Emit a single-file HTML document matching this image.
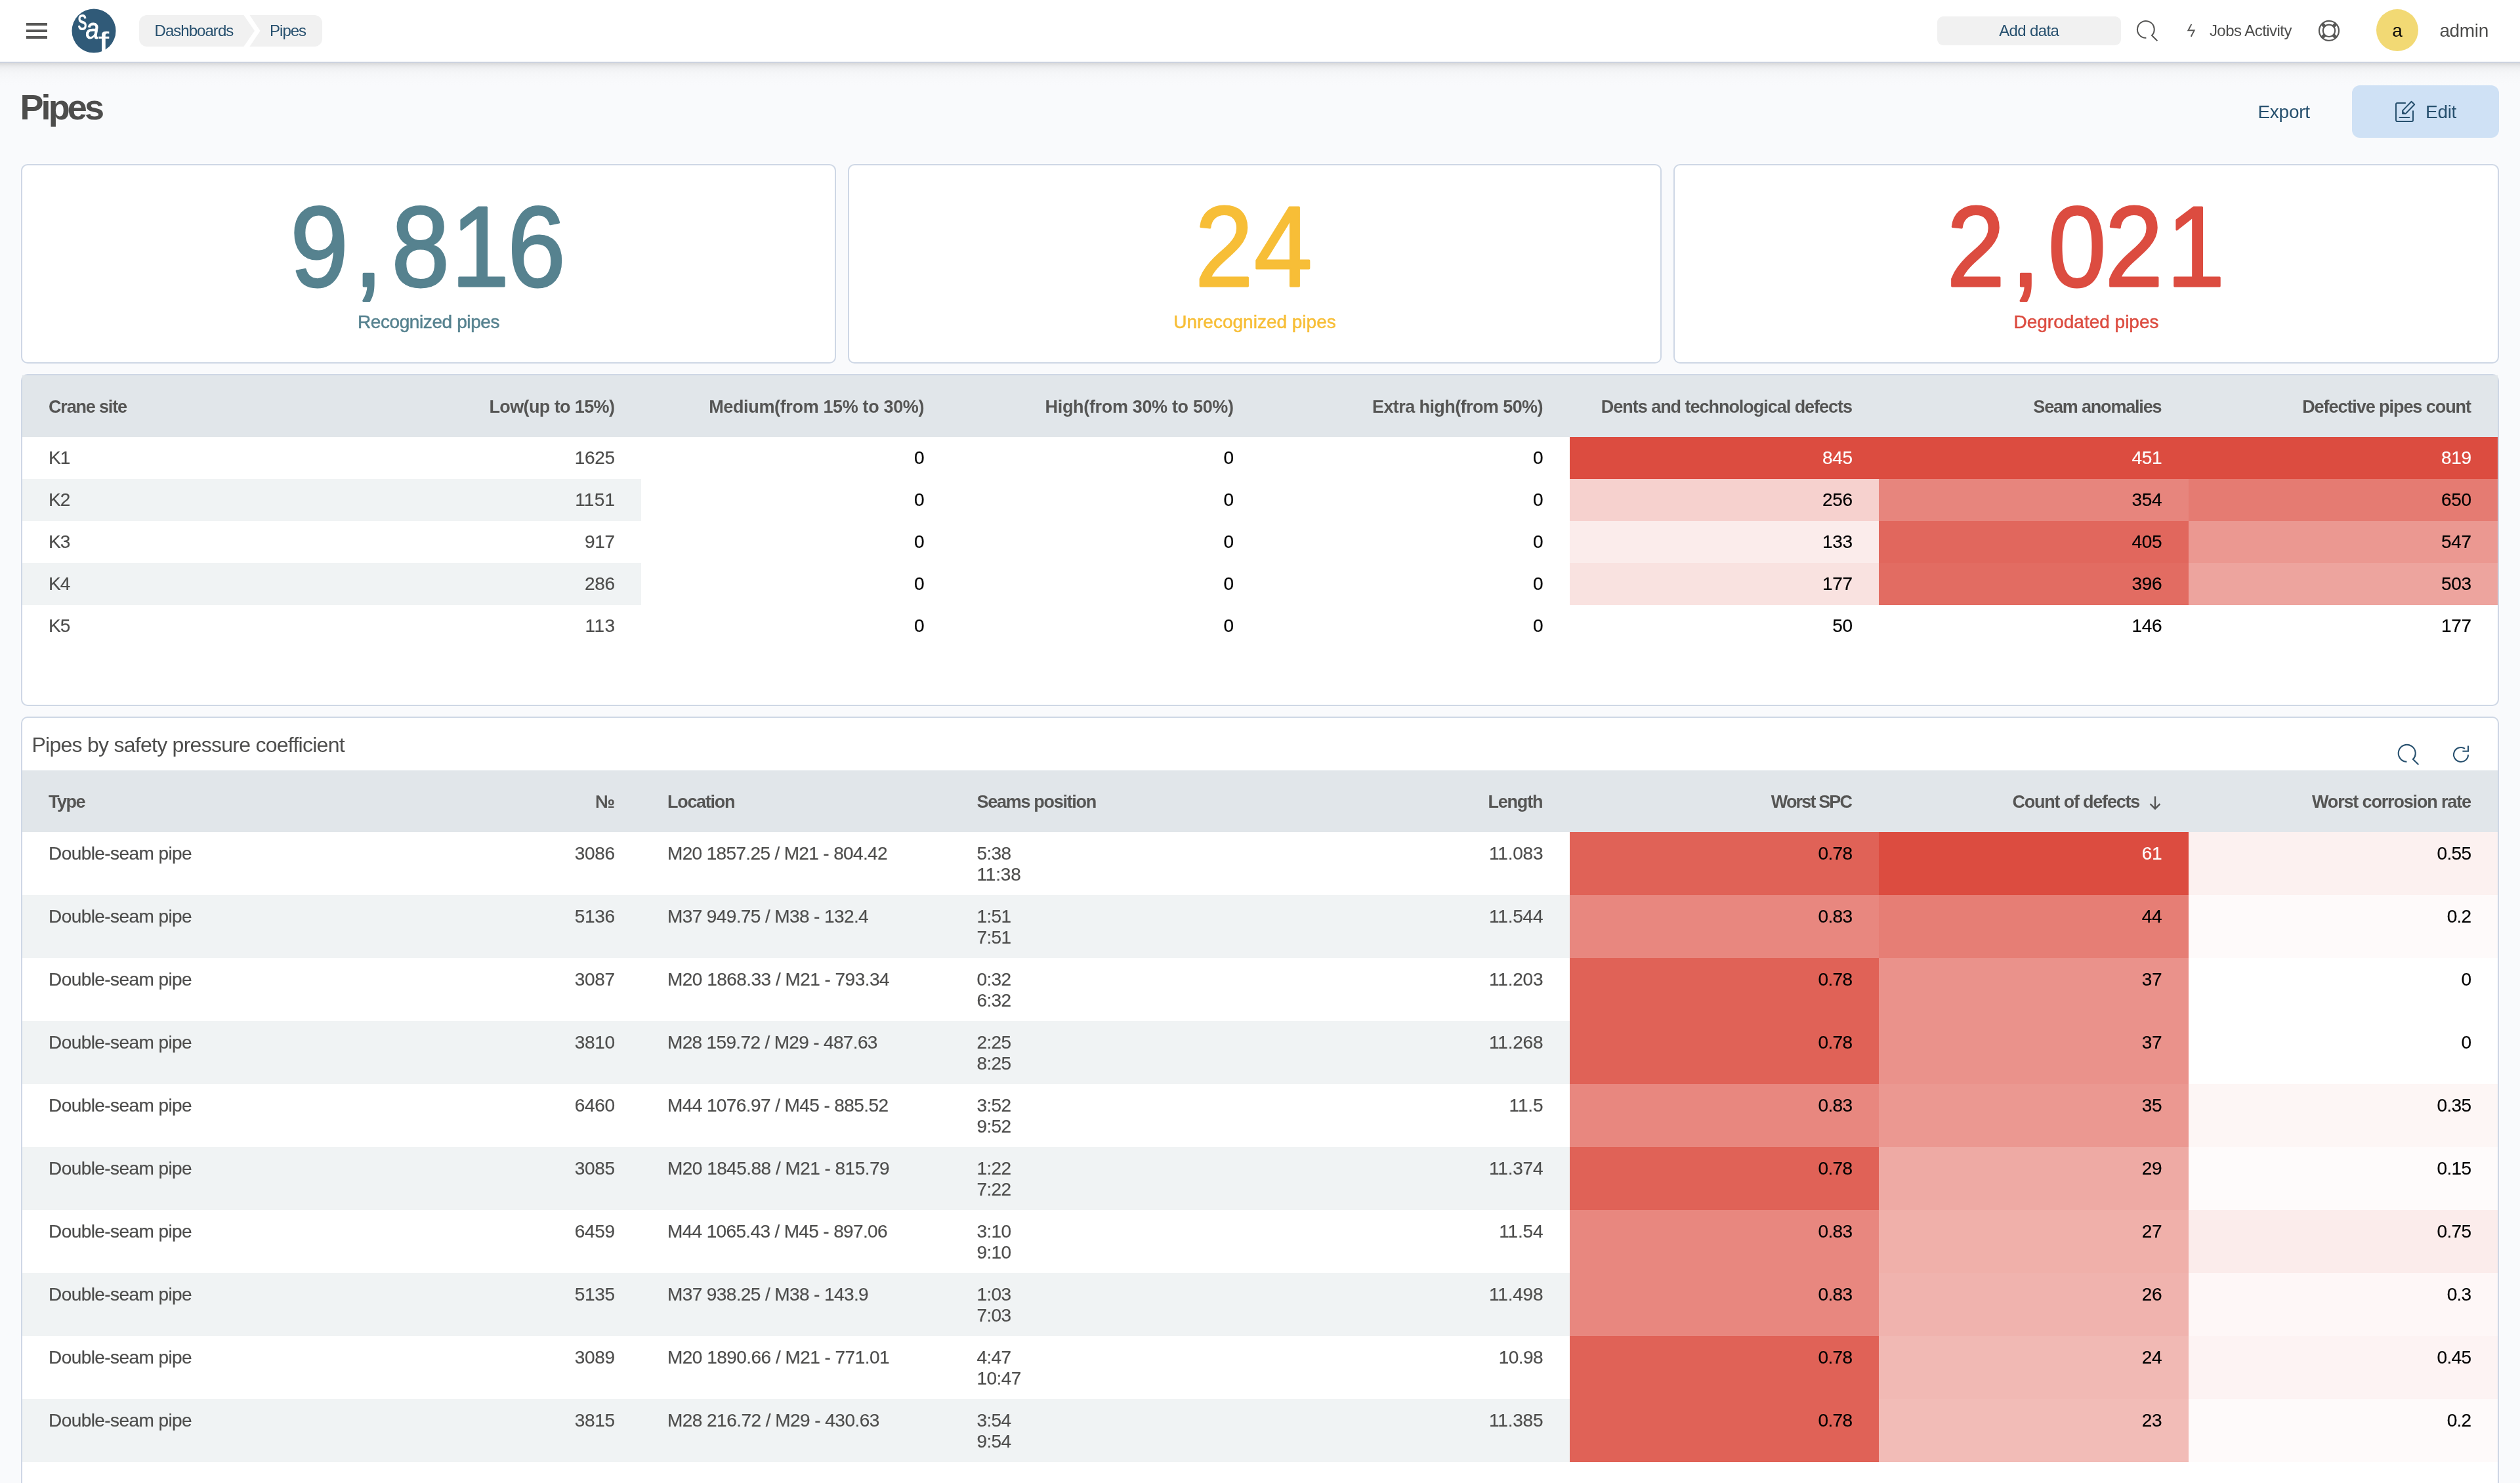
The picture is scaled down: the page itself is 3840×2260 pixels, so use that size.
<!DOCTYPE html>
<html lang="en">
<head>
<meta charset="utf-8">
<title>Pipes</title>
<style>
html{font-size:calc(100vw / 38.4)}
*{box-sizing:border-box;margin:0;padding:0}
html,body{width:38.4rem;height:22.6rem;overflow:hidden;background:#f9fafc}
body{position:relative;font-family:"Liberation Sans",sans-serif;font-size:.28rem;color:#4d4d4c;-webkit-font-smoothing:antialiased}
#root{position:absolute;left:0;top:0;width:38.4rem;height:22.6rem;overflow:hidden;will-change:transform}
.abs{position:absolute}
.t{position:absolute;white-space:nowrap;line-height:1}
#hdr{position:absolute;left:0;top:0;width:38.4rem;height:.94rem;background:#fff;z-index:2}
#shd{position:absolute;left:0;top:.94rem;width:38.4rem;height:.36rem;z-index:1;background:linear-gradient(to bottom,#c9d0df 0,#c9d0df .014rem,#d8dade .019rem,#dcdcdc .03rem,#e3e4e6 .05rem,#e9eaec .07rem,#eff0f2 .1rem,#f3f4f6 .14rem,#f6f7f9 .2rem,#f8f9fb .28rem,#f9fafc .36rem)}
.bar{position:absolute;left:.4rem;width:.32rem;height:.04rem;background:#575756}
.blue{color:#27506e}
.card{position:absolute;background:#fff;border:.02rem solid #ced7e5;border-radius:.1rem}
.bn span{position:absolute;line-height:1;white-space:pre;transform-origin:0 0;-webkit-text-stroke:.03rem currentColor}
.lbl{-webkit-text-stroke:.005rem currentColor;position:absolute;left:0;width:100%;text-align:center;white-space:nowrap;line-height:1;font-size:.28rem}
.th{position:absolute;left:.34rem;width:37.72rem;background:#e1e6ea}
.c{position:absolute;width:4.715rem;padding:0 .4rem;white-space:nowrap;font-size:.28rem;color:#4d4d4c;-webkit-text-stroke:.002rem currentColor}
.c.t2{padding-top:.166rem;line-height:.32rem}
.hc{font-weight:700;color:#555554;-webkit-text-stroke:0}
.l{text-align:left}.r{text-align:right}
.k{color:#000}.w{color:#fff}
.stripe{position:absolute;background:#f0f3f4}
.sort{display:inline-block;vertical-align:top;margin:.376rem .008rem 0 .124rem}
</style>
</head>
<body>
<div id="root">
<!-- ======= top bar ======= -->
<div id="hdr">
  <div class="bar" style="top:.35rem"></div><div class="bar" style="top:.45rem"></div><div class="bar" style="top:.55rem"></div>
  <svg class="abs" style="width:0.74rem;height:0.74rem;left:1.06rem;top:.1rem" viewBox="0 0 74 74">
    <circle cx="37" cy="37" r="33.5" fill="#305a78"/>
    <g fill="#fff" font-family="Liberation Sans, sans-serif">
      <text x="0" y="0" font-size="35" font-weight="700" transform="translate(12.2,36.3) scale(.62,1)">S</text>
      <text x="0" y="0" font-size="44" font-style="italic" stroke="#fff" stroke-width=".9" transform="translate(24.4,48.9) scale(.84,1)">a</text>
      <text x="0" y="0" font-size="40" stroke="#fff" stroke-width=".5" transform="translate(44.6,68) scale(1.38,1)">f</text>
    </g>
  </svg>
  <svg class="abs" style="width:2.79rem;height:0.48rem;left:2.12rem;top:.23rem" viewBox="0 0 279 48">
    <path d="M12 0H159.4L176 24L159.4 48H12A12 12 0 0 1 0 36V12A12 12 0 0 1 12 0Z" fill="#f1f1f1"/>
    <path d="M168.4 0H267A12 12 0 0 1 279 12V36A12 12 0 0 1 267 48H168.4L184.6 24Z" fill="#f1f1f1"/>
  </svg>
  <div class="t blue" style="left:2.356rem;top:.347rem;font-size:.24rem"><span style="letter-spacing:-.0097rem;margin-right:.0097rem;">Dashboards</span></div>
  <div class="t blue" style="left:4.11rem;top:.347rem;font-size:.24rem"><span style="letter-spacing:-.0098rem;margin-right:.0098rem;">Pipes</span></div>

  <div class="abs" style="left:29.52rem;top:.25rem;width:2.8rem;height:.44rem;border-radius:.09rem;background:#f1f1f1"></div>
  <div class="t blue" style="left:29.52rem;top:.347rem;width:2.8rem;text-align:center;font-size:.24rem"><span style="letter-spacing:-.0062rem;margin-right:.0062rem;">Add data</span></div>
  <!-- search -->
  <svg class="abs" style="width:0.44rem;height:0.44rem;left:32.5rem;top:.26rem" viewBox="0 0 44 44">
    <path d="M20.4 31.8A12.9 12.9 0 1 1 29 28L37.3 36.3" fill="none" stroke="#575756" stroke-width="2.1" stroke-linejoin="miter"/>
  </svg>
  <!-- lightning -->
  <svg class="abs" style="width:0.24rem;height:0.26rem;left:33.28rem;top:.34rem" viewBox="0 0 24 26">
    <path d="M11.4 2.9L6.4 12.2H15.7L10.7 21.7" fill="none" stroke="#575756" stroke-width="1.9" stroke-linejoin="miter"/>
  </svg>
  <div class="t" style="left:33.669rem;top:.351rem;font-size:.24rem;color:#4d4d4c"><span style="letter-spacing:-.0054rem;margin-right:.0054rem;">Jobs Activity</span></div>
  <!-- lifebuoy -->
  <svg class="abs" style="width:0.4rem;height:0.4rem;left:35.29rem;top:.27rem" viewBox="0 0 40 40">
    <circle cx="20" cy="19.8" r="15" fill="none" stroke="#575756" stroke-width="2.2"/>
    <circle cx="20" cy="19.8" r="9.2" fill="none" stroke="#575756" stroke-width="2.2"/>
    <path d="M13.5 13.3L9.4 9.2M26.5 13.3L30.6 9.2M13.5 26.3L9.4 30.4M26.5 26.3L30.6 30.4" stroke="#575756" stroke-width="5.2"/>
  </svg>
  <div class="abs" style="left:36.21rem;top:.14rem;width:.64rem;height:.64rem;border-radius:50%;background:#f2d974"></div>
  <div class="t" style="left:36.21rem;top:.328rem;width:.64rem;text-align:center;font-size:.28rem;color:#0a0a0a">a</div>
  <div class="t" style="left:37.174rem;top:.326rem;font-size:.28rem;color:#4d4d4c"><span style="letter-spacing:-.0035rem;margin-right:.0035rem;">admin</span></div>
</div>

<div id="shd"></div>
<!-- ======= page title row ======= -->
<div class="t" style="left:.304rem;top:1.359rem;font-size:.54rem;font-weight:700;color:#4d4d4c"><span style="letter-spacing:-.0386rem;margin-right:.0386rem;">Pipes</span></div>
<div class="t blue" style="left:34.404rem;top:1.566rem;font-size:.28rem"><span style="letter-spacing:-.0025rem;margin-right:.0025rem;">Export</span></div>
<div class="abs" style="left:35.84rem;top:1.3rem;width:2.24rem;height:.8rem;border-radius:.12rem;background:#cfe1f5"></div>
<svg class="abs" style="width:0.4rem;height:0.4rem;left:36.46rem;top:1.5rem" viewBox="0 0 40 40" fill="none" stroke="#27506e" stroke-width="2" stroke-linecap="round" stroke-linejoin="round">
  <path d="M19.1 7H6.9A1.9 1.9 0 0 0 5 8.9V33.1A1.9 1.9 0 0 0 6.9 35H29.1A1.9 1.9 0 0 0 31 33.1V19.3"/>
  <path d="M28.6 4.7L33.2 9.3L19.6 23.2H15.1V18.6Z"/>
  <path d="M15.4 19.6V22.9H18.6Z" fill="#27506e" stroke-width="1"/>
  <path d="M10.5 28.9H25.4"/>
</svg>
<div class="t blue" style="left:36.96rem;top:1.569rem;font-size:.28rem"><span style="letter-spacing:-.0029rem;margin-right:.0029rem;">Edit</span></div>

<!-- ======= KPI cards ======= -->
<div class="card" style="left:.32rem;top:2.5rem;width:12.42rem;height:3.04rem">
  <div class="lbl" style="top:2.245rem;color:#56828f;letter-spacing:-.004rem">Recognized pipes</div>
</div>
<div class="card" style="left:12.92rem;top:2.5rem;width:12.4rem;height:3.04rem">
  <div class="lbl" style="top:2.245rem;color:#f7be37">Unrecognized pipes</div>
</div>
<div class="card" style="left:25.5rem;top:2.5rem;width:12.58rem;height:3.04rem">
  <div class="lbl" style="top:2.245rem;color:#dc4c40">Degrodated pipes</div>
</div>

<svg class="abs" style="width:38.4rem;height:6rem;left:0;top:0;overflow:visible" viewBox="0 0 3840 600" font-family="Liberation Sans, sans-serif" font-size="175" stroke-width="3" stroke-linejoin="round">
<text transform="scale(0.91,1)" x="486.0 592.6 655.5 755.4 849.7" y="436.5" fill="#56828f" stroke="#56828f">9,816</text>
<text transform="scale(0.91,1)" x="2001.2 2100.1" y="436.5" fill="#f7be37" stroke="#f7be37">24</text>
<text transform="scale(0.91,1)" x="3259.9 3367.5 3429.3 3524.6 3628.0" y="436.5" fill="#dc4c40" stroke="#dc4c40">2,021</text>
</svg>

<!-- ======= table 1 ======= -->
<div class="card" style="left:.32rem;top:5.7rem;width:37.76rem;height:5.06rem"></div>
<div class="th" style="top:5.72rem;height:.94rem"></div>
<div class="c hc l" style="left:.34rem;top:5.72rem;height:.94rem;line-height:.964rem"><span style="font-size:.27rem;letter-spacing:-.0117rem;margin-right:.0117rem;">Crane site</span></div>
<div class="c hc r" style="left:5.055rem;top:5.72rem;height:.94rem;line-height:.964rem"><span style="font-size:.27rem;letter-spacing:-.0061rem;margin-right:.0061rem;">Low(up to 15%)</span></div>
<div class="c hc r" style="left:9.77rem;top:5.72rem;height:.94rem;line-height:.964rem"><span style="font-size:.27rem;letter-spacing:-.0035rem;margin-right:.0035rem;">Medium(from 15% to 30%)</span></div>
<div class="c hc r" style="left:14.485rem;top:5.72rem;height:.94rem;line-height:.964rem"><span style="font-size:.27rem;letter-spacing:-.0033rem;margin-right:.0033rem;">High(from 30% to 50%)</span></div>
<div class="c hc r" style="left:19.2rem;top:5.72rem;height:.94rem;line-height:.964rem"><span style="font-size:.27rem;letter-spacing:-.0058rem;margin-right:.0058rem;">Extra high(from 50%)</span></div>
<div class="c hc r" style="left:23.915rem;top:5.72rem;height:.94rem;line-height:.964rem"><span style="font-size:.27rem;letter-spacing:-.0103rem;margin-right:.0103rem;">Dents and technological defects</span></div>
<div class="c hc r" style="left:28.63rem;top:5.72rem;height:.94rem;line-height:.964rem"><span style="font-size:.27rem;letter-spacing:-.0119rem;margin-right:.0119rem;">Seam anomalies</span></div>
<div class="c hc r" style="left:33.345rem;top:5.72rem;height:.94rem;line-height:.964rem"><span style="font-size:.27rem;letter-spacing:-.0106rem;margin-right:.0106rem;">Defective pipes count</span></div>
<div class="c l" style="left:.34rem;top:6.66rem;height:.64rem;line-height:.645rem;"><span style="letter-spacing:-.0095rem;margin-right:.0095rem;">K1</span></div>
<div class="c r" style="left:5.055rem;top:6.66rem;height:.64rem;line-height:.645rem;"><span style="letter-spacing:-.0031rem;margin-right:.0031rem;">1625</span></div>
<div class="c r k" style="left:9.77rem;top:6.66rem;height:.64rem;line-height:.645rem;"><span style="letter-spacing:-.0031rem;margin-right:.0031rem;">0</span></div>
<div class="c r k" style="left:14.485rem;top:6.66rem;height:.64rem;line-height:.645rem;"><span style="letter-spacing:-.0031rem;margin-right:.0031rem;">0</span></div>
<div class="c r k" style="left:19.2rem;top:6.66rem;height:.64rem;line-height:.645rem;"><span style="letter-spacing:-.0031rem;margin-right:.0031rem;">0</span></div>
<div class="c r k w" style="left:23.915rem;top:6.66rem;height:.64rem;line-height:.645rem;background:rgb(220,76,64);"><span style="letter-spacing:-.0031rem;margin-right:.0031rem;">845</span></div>
<div class="c r k w" style="left:28.63rem;top:6.66rem;height:.64rem;line-height:.645rem;background:rgb(220,76,64);"><span style="letter-spacing:-.0031rem;margin-right:.0031rem;">451</span></div>
<div class="c r k w" style="left:33.345rem;top:6.66rem;height:.64rem;line-height:.645rem;background:rgb(220,76,64);"><span style="letter-spacing:-.0031rem;margin-right:.0031rem;">819</span></div>
<div class="stripe" style="left:.34rem;top:7.3rem;width:9.43rem;height:.64rem"></div>
<div class="c l" style="left:.34rem;top:7.3rem;height:.64rem;line-height:.645rem;"><span style="letter-spacing:-.0095rem;margin-right:.0095rem;">K2</span></div>
<div class="c r" style="left:5.055rem;top:7.3rem;height:.64rem;line-height:.645rem;"><span style="letter-spacing:.0021rem;margin-right:-.0021rem;">1151</span></div>
<div class="c r k" style="left:9.77rem;top:7.3rem;height:.64rem;line-height:.645rem;"><span style="letter-spacing:-.0031rem;margin-right:.0031rem;">0</span></div>
<div class="c r k" style="left:14.485rem;top:7.3rem;height:.64rem;line-height:.645rem;"><span style="letter-spacing:-.0031rem;margin-right:.0031rem;">0</span></div>
<div class="c r k" style="left:19.2rem;top:7.3rem;height:.64rem;line-height:.645rem;"><span style="letter-spacing:-.0031rem;margin-right:.0031rem;">0</span></div>
<div class="c r k" style="left:23.915rem;top:7.3rem;height:.64rem;line-height:.645rem;background:rgb(246,209,206);"><span style="letter-spacing:-.0031rem;margin-right:.0031rem;">256</span></div>
<div class="c r k" style="left:28.63rem;top:7.3rem;height:.64rem;line-height:.645rem;background:rgb(231,133,125);"><span style="letter-spacing:-.0031rem;margin-right:.0031rem;">354</span></div>
<div class="c r k" style="left:33.345rem;top:7.3rem;height:.64rem;line-height:.645rem;background:rgb(229,123,114);"><span style="letter-spacing:-.0031rem;margin-right:.0031rem;">650</span></div>
<div class="c l" style="left:.34rem;top:7.94rem;height:.64rem;line-height:.645rem;"><span style="letter-spacing:-.0095rem;margin-right:.0095rem;">K3</span></div>
<div class="c r" style="left:5.055rem;top:7.94rem;height:.64rem;line-height:.645rem;"><span style="letter-spacing:-.0031rem;margin-right:.0031rem;">917</span></div>
<div class="c r k" style="left:9.77rem;top:7.94rem;height:.64rem;line-height:.645rem;"><span style="letter-spacing:-.0031rem;margin-right:.0031rem;">0</span></div>
<div class="c r k" style="left:14.485rem;top:7.94rem;height:.64rem;line-height:.645rem;"><span style="letter-spacing:-.0031rem;margin-right:.0031rem;">0</span></div>
<div class="c r k" style="left:19.2rem;top:7.94rem;height:.64rem;line-height:.645rem;"><span style="letter-spacing:-.0031rem;margin-right:.0031rem;">0</span></div>
<div class="c r k" style="left:23.915rem;top:7.94rem;height:.64rem;line-height:.645rem;background:rgb(251,236,235);"><span style="letter-spacing:-.0031rem;margin-right:.0031rem;">133</span></div>
<div class="c r k" style="left:28.63rem;top:7.94rem;height:.64rem;line-height:.645rem;background:rgb(225,103,93);"><span style="letter-spacing:-.0031rem;margin-right:.0031rem;">405</span></div>
<div class="c r k" style="left:33.345rem;top:7.94rem;height:.64rem;line-height:.645rem;background:rgb(235,152,145);"><span style="letter-spacing:-.0031rem;margin-right:.0031rem;">547</span></div>
<div class="stripe" style="left:.34rem;top:8.58rem;width:9.43rem;height:.64rem"></div>
<div class="c l" style="left:.34rem;top:8.58rem;height:.64rem;line-height:.645rem;"><span style="letter-spacing:-.0095rem;margin-right:.0095rem;">K4</span></div>
<div class="c r" style="left:5.055rem;top:8.58rem;height:.64rem;line-height:.645rem;"><span style="letter-spacing:-.0031rem;margin-right:.0031rem;">286</span></div>
<div class="c r k" style="left:9.77rem;top:8.58rem;height:.64rem;line-height:.645rem;"><span style="letter-spacing:-.0031rem;margin-right:.0031rem;">0</span></div>
<div class="c r k" style="left:14.485rem;top:8.58rem;height:.64rem;line-height:.645rem;"><span style="letter-spacing:-.0031rem;margin-right:.0031rem;">0</span></div>
<div class="c r k" style="left:19.2rem;top:8.58rem;height:.64rem;line-height:.645rem;"><span style="letter-spacing:-.0031rem;margin-right:.0031rem;">0</span></div>
<div class="c r k" style="left:23.915rem;top:8.58rem;height:.64rem;line-height:.645rem;background:rgb(249,226,224);"><span style="letter-spacing:-.0031rem;margin-right:.0031rem;">177</span></div>
<div class="c r k" style="left:28.63rem;top:8.58rem;height:.64rem;line-height:.645rem;background:rgb(226,108,98);"><span style="letter-spacing:-.0031rem;margin-right:.0031rem;">396</span></div>
<div class="c r k" style="left:33.345rem;top:8.58rem;height:.64rem;line-height:.645rem;background:rgb(237,164,158);"><span style="letter-spacing:-.0031rem;margin-right:.0031rem;">503</span></div>
<div class="c l" style="left:.34rem;top:9.22rem;height:.64rem;line-height:.645rem;"><span style="letter-spacing:-.0095rem;margin-right:.0095rem;">K5</span></div>
<div class="c r" style="left:5.055rem;top:9.22rem;height:.64rem;line-height:.645rem;"><span style="letter-spacing:.0038rem;margin-right:-.0038rem;">113</span></div>
<div class="c r k" style="left:9.77rem;top:9.22rem;height:.64rem;line-height:.645rem;"><span style="letter-spacing:-.0031rem;margin-right:.0031rem;">0</span></div>
<div class="c r k" style="left:14.485rem;top:9.22rem;height:.64rem;line-height:.645rem;"><span style="letter-spacing:-.0031rem;margin-right:.0031rem;">0</span></div>
<div class="c r k" style="left:19.2rem;top:9.22rem;height:.64rem;line-height:.645rem;"><span style="letter-spacing:-.0031rem;margin-right:.0031rem;">0</span></div>
<div class="c r k" style="left:23.915rem;top:9.22rem;height:.64rem;line-height:.645rem;"><span style="letter-spacing:-.0031rem;margin-right:.0031rem;">50</span></div>
<div class="c r k" style="left:28.63rem;top:9.22rem;height:.64rem;line-height:.645rem;"><span style="letter-spacing:-.0031rem;margin-right:.0031rem;">146</span></div>
<div class="c r k" style="left:33.345rem;top:9.22rem;height:.64rem;line-height:.645rem;"><span style="letter-spacing:-.0031rem;margin-right:.0031rem;">177</span></div>

<!-- ======= table 2 ======= -->
<div class="card" style="left:.32rem;top:10.92rem;width:37.76rem;height:13rem"></div>
<div class="t" style="left:.484rem;top:11.188rem;font-size:.32rem;color:#4d4d4c"><span style="letter-spacing:-.0073rem;margin-right:.0073rem;">Pipes by safety pressure coefficient</span></div>
<svg class="abs" style="width:0.44rem;height:0.44rem;left:36.48rem;top:11.28rem" viewBox="0 0 44 44">
  <path d="M19.4 32.9A13 13 0 1 1 28.7 29.3" fill="none" stroke="#27506e" stroke-width="2.1"/>
  <path d="M28.4 28.4L37.4 37.2" fill="none" stroke="#27506e" stroke-width="2.1"/>
</svg>
<svg class="abs" style="width:0.4rem;height:0.4rem;left:37.3rem;top:11.3rem" viewBox="0 0 40 40">
  <path d="M26 10.8A11 11 0 1 0 31 19.9" fill="none" stroke="#27506e" stroke-width="2.1"/>
  <path d="M31 6.6V14.8H22.4" fill="none" stroke="#27506e" stroke-width="2.1"/>
</svg>
<div class="th" style="top:11.74rem;height:.94rem"></div>
<div class="c hc l" style="left:.34rem;top:11.74rem;height:.94rem;line-height:.964rem"><span style="font-size:.27rem;letter-spacing:-.0149rem;margin-right:.0149rem;">Type</span></div>
<div class="c hc r" style="left:5.055rem;top:11.74rem;height:.94rem;line-height:.964rem"><span style="font-size:.27rem;letter-spacing:-.0134rem;margin-right:.0134rem;">№</span></div>
<div class="c hc l" style="left:9.77rem;top:11.74rem;height:.94rem;line-height:.964rem"><span style="font-size:.27rem;letter-spacing:-.013rem;margin-right:.013rem;">Location</span></div>
<div class="c hc l" style="left:14.485rem;top:11.74rem;height:.94rem;line-height:.964rem"><span style="font-size:.27rem;letter-spacing:-.0129rem;margin-right:.0129rem;">Seams position</span></div>
<div class="c hc r" style="left:19.2rem;top:11.74rem;height:.94rem;line-height:.964rem"><span style="font-size:.27rem;letter-spacing:-.0117rem;margin-right:.0117rem;">Length</span></div>
<div class="c hc r" style="left:23.915rem;top:11.74rem;height:.94rem;line-height:.964rem"><span style="font-size:.27rem;letter-spacing:-.0185rem;margin-right:.0185rem;">Worst SPC</span></div>
<div class="c hc r" style="left:28.63rem;top:11.74rem;height:.94rem;line-height:.964rem"><span style="font-size:.27rem;letter-spacing:-.0121rem;margin-right:.0121rem;">Count of defects</span><svg style="width:0.2rem;height:0.24rem;" class="sort" viewBox="0 0 20 24"><path d="M10 1.5V20.5M2.6 13.2L10 20.6L17.4 13.2" fill="none" stroke="#555554" stroke-width="2.4"/></svg></div>
<div class="c hc r" style="left:33.345rem;top:11.74rem;height:.94rem;line-height:.964rem"><span style="font-size:.27rem;letter-spacing:-.0116rem;margin-right:.0116rem;">Worst corrosion rate</span></div>
<div class="c t2 l" style="left:.34rem;top:12.68rem;height:.96rem;"><span style="letter-spacing:-.0057rem;margin-right:.0057rem;">Double-seam pipe</span></div>
<div class="c t2 r" style="left:5.055rem;top:12.68rem;height:.96rem;"><span style="letter-spacing:-.0031rem;margin-right:.0031rem;">3086</span></div>
<div class="c t2 l" style="left:9.77rem;top:12.68rem;height:.96rem;"><span style="letter-spacing:-.0065rem;margin-right:.0065rem;">M20 1857.25 / M21 - 804.42</span></div>
<div class="c t2 l" style="left:14.485rem;top:12.68rem;height:.96rem;"><span style="letter-spacing:-.0064rem;margin-right:.0064rem;">5:38</span><br><span style="letter-spacing:-.0016rem;margin-right:.0016rem;">11:38</span></div>
<div class="c t2 r" style="left:19.2rem;top:12.68rem;height:.96rem;"><span style="letter-spacing:-.0021rem;margin-right:.0021rem;">11.083</span></div>
<div class="c t2 r k" style="left:23.915rem;top:12.68rem;height:.96rem;background:rgb(224,98,87);"><span style="letter-spacing:-.0068rem;margin-right:.0068rem;">0.78</span></div>
<div class="c t2 r k w" style="left:28.63rem;top:12.68rem;height:.96rem;background:rgb(220,76,64);"><span style="letter-spacing:-.0031rem;margin-right:.0031rem;">61</span></div>
<div class="c t2 r k" style="left:33.345rem;top:12.68rem;height:.96rem;background:rgb(252,241,240);"><span style="letter-spacing:-.0068rem;margin-right:.0068rem;">0.55</span></div>
<div class="stripe" style="left:.34rem;top:13.64rem;width:23.575rem;height:.96rem"></div>
<div class="c t2 l" style="left:.34rem;top:13.64rem;height:.96rem;"><span style="letter-spacing:-.0057rem;margin-right:.0057rem;">Double-seam pipe</span></div>
<div class="c t2 r" style="left:5.055rem;top:13.64rem;height:.96rem;"><span style="letter-spacing:-.0031rem;margin-right:.0031rem;">5136</span></div>
<div class="c t2 l" style="left:9.77rem;top:13.64rem;height:.96rem;"><span style="letter-spacing:-.0061rem;margin-right:.0061rem;">M37 949.75 / M38 - 132.4</span></div>
<div class="c t2 l" style="left:14.485rem;top:13.64rem;height:.96rem;"><span style="letter-spacing:-.0064rem;margin-right:.0064rem;">1:51</span><br><span style="letter-spacing:-.0064rem;margin-right:.0064rem;">7:51</span></div>
<div class="c t2 r" style="left:19.2rem;top:13.64rem;height:.96rem;"><span style="letter-spacing:-.0021rem;margin-right:.0021rem;">11.544</span></div>
<div class="c t2 r k" style="left:23.915rem;top:13.64rem;height:.96rem;background:rgb(232,135,127);"><span style="letter-spacing:-.0068rem;margin-right:.0068rem;">0.83</span></div>
<div class="c t2 r k" style="left:28.63rem;top:13.64rem;height:.96rem;background:rgb(230,126,117);"><span style="letter-spacing:-.0031rem;margin-right:.0031rem;">44</span></div>
<div class="c t2 r k" style="left:33.345rem;top:13.64rem;height:.96rem;background:rgb(254,250,250);"><span style="letter-spacing:-.0081rem;margin-right:.0081rem;">0.2</span></div>
<div class="c t2 l" style="left:.34rem;top:14.6rem;height:.96rem;"><span style="letter-spacing:-.0057rem;margin-right:.0057rem;">Double-seam pipe</span></div>
<div class="c t2 r" style="left:5.055rem;top:14.6rem;height:.96rem;"><span style="letter-spacing:-.0031rem;margin-right:.0031rem;">3087</span></div>
<div class="c t2 l" style="left:9.77rem;top:14.6rem;height:.96rem;"><span style="letter-spacing:-.0053rem;margin-right:.0053rem;">M20 1868.33 / M21 - 793.34</span></div>
<div class="c t2 l" style="left:14.485rem;top:14.6rem;height:.96rem;"><span style="letter-spacing:-.0064rem;margin-right:.0064rem;">0:32</span><br><span style="letter-spacing:-.0064rem;margin-right:.0064rem;">6:32</span></div>
<div class="c t2 r" style="left:19.2rem;top:14.6rem;height:.96rem;"><span style="letter-spacing:-.0021rem;margin-right:.0021rem;">11.203</span></div>
<div class="c t2 r k" style="left:23.915rem;top:14.6rem;height:.96rem;background:rgb(224,98,87);"><span style="letter-spacing:-.0068rem;margin-right:.0068rem;">0.78</span></div>
<div class="c t2 r k" style="left:28.63rem;top:14.6rem;height:.96rem;background:rgb(234,146,139);"><span style="letter-spacing:-.0031rem;margin-right:.0031rem;">37</span></div>
<div class="c t2 r k" style="left:33.345rem;top:14.6rem;height:.96rem;"><span style="letter-spacing:-.0031rem;margin-right:.0031rem;">0</span></div>
<div class="stripe" style="left:.34rem;top:15.56rem;width:23.575rem;height:.96rem"></div>
<div class="c t2 l" style="left:.34rem;top:15.56rem;height:.96rem;"><span style="letter-spacing:-.0057rem;margin-right:.0057rem;">Double-seam pipe</span></div>
<div class="c t2 r" style="left:5.055rem;top:15.56rem;height:.96rem;"><span style="letter-spacing:-.0031rem;margin-right:.0031rem;">3810</span></div>
<div class="c t2 l" style="left:9.77rem;top:15.56rem;height:.96rem;"><span style="letter-spacing:-.0066rem;margin-right:.0066rem;">M28 159.72 / M29 - 487.63</span></div>
<div class="c t2 l" style="left:14.485rem;top:15.56rem;height:.96rem;"><span style="letter-spacing:-.0064rem;margin-right:.0064rem;">2:25</span><br><span style="letter-spacing:-.0064rem;margin-right:.0064rem;">8:25</span></div>
<div class="c t2 r" style="left:19.2rem;top:15.56rem;height:.96rem;"><span style="letter-spacing:-.0021rem;margin-right:.0021rem;">11.268</span></div>
<div class="c t2 r k" style="left:23.915rem;top:15.56rem;height:.96rem;background:rgb(224,98,87);"><span style="letter-spacing:-.0068rem;margin-right:.0068rem;">0.78</span></div>
<div class="c t2 r k" style="left:28.63rem;top:15.56rem;height:.96rem;background:rgb(234,146,139);"><span style="letter-spacing:-.0031rem;margin-right:.0031rem;">37</span></div>
<div class="c t2 r k" style="left:33.345rem;top:15.56rem;height:.96rem;"><span style="letter-spacing:-.0031rem;margin-right:.0031rem;">0</span></div>
<div class="c t2 l" style="left:.34rem;top:16.52rem;height:.96rem;"><span style="letter-spacing:-.0057rem;margin-right:.0057rem;">Double-seam pipe</span></div>
<div class="c t2 r" style="left:5.055rem;top:16.52rem;height:.96rem;"><span style="letter-spacing:-.0031rem;margin-right:.0031rem;">6460</span></div>
<div class="c t2 l" style="left:9.77rem;top:16.52rem;height:.96rem;"><span style="letter-spacing:-.0059rem;margin-right:.0059rem;">M44 1076.97 / M45 - 885.52</span></div>
<div class="c t2 l" style="left:14.485rem;top:16.52rem;height:.96rem;"><span style="letter-spacing:-.0064rem;margin-right:.0064rem;">3:52</span><br><span style="letter-spacing:-.0064rem;margin-right:.0064rem;">9:52</span></div>
<div class="c t2 r" style="left:19.2rem;top:16.52rem;height:.96rem;"><span style="letter-spacing:-.0016rem;margin-right:.0016rem;">11.5</span></div>
<div class="c t2 r k" style="left:23.915rem;top:16.52rem;height:.96rem;background:rgb(232,135,127);"><span style="letter-spacing:-.0068rem;margin-right:.0068rem;">0.83</span></div>
<div class="c t2 r k" style="left:28.63rem;top:16.52rem;height:.96rem;background:rgb(235,152,145);"><span style="letter-spacing:-.0031rem;margin-right:.0031rem;">35</span></div>
<div class="c t2 r k" style="left:33.345rem;top:16.52rem;height:.96rem;background:rgb(253,246,245);"><span style="letter-spacing:-.0068rem;margin-right:.0068rem;">0.35</span></div>
<div class="stripe" style="left:.34rem;top:17.48rem;width:23.575rem;height:.96rem"></div>
<div class="c t2 l" style="left:.34rem;top:17.48rem;height:.96rem;"><span style="letter-spacing:-.0057rem;margin-right:.0057rem;">Double-seam pipe</span></div>
<div class="c t2 r" style="left:5.055rem;top:17.48rem;height:.96rem;"><span style="letter-spacing:-.0031rem;margin-right:.0031rem;">3085</span></div>
<div class="c t2 l" style="left:9.77rem;top:17.48rem;height:.96rem;"><span style="letter-spacing:-.0053rem;margin-right:.0053rem;">M20 1845.88 / M21 - 815.79</span></div>
<div class="c t2 l" style="left:14.485rem;top:17.48rem;height:.96rem;"><span style="letter-spacing:-.0064rem;margin-right:.0064rem;">1:22</span><br><span style="letter-spacing:-.0064rem;margin-right:.0064rem;">7:22</span></div>
<div class="c t2 r" style="left:19.2rem;top:17.48rem;height:.96rem;"><span style="letter-spacing:-.0021rem;margin-right:.0021rem;">11.374</span></div>
<div class="c t2 r k" style="left:23.915rem;top:17.48rem;height:.96rem;background:rgb(224,98,87);"><span style="letter-spacing:-.0068rem;margin-right:.0068rem;">0.78</span></div>
<div class="c t2 r k" style="left:28.63rem;top:17.48rem;height:.96rem;background:rgb(238,170,164);"><span style="letter-spacing:-.0031rem;margin-right:.0031rem;">29</span></div>
<div class="c t2 r k" style="left:33.345rem;top:17.48rem;height:.96rem;background:rgb(254,251,251);"><span style="letter-spacing:-.0068rem;margin-right:.0068rem;">0.15</span></div>
<div class="c t2 l" style="left:.34rem;top:18.44rem;height:.96rem;"><span style="letter-spacing:-.0057rem;margin-right:.0057rem;">Double-seam pipe</span></div>
<div class="c t2 r" style="left:5.055rem;top:18.44rem;height:.96rem;"><span style="letter-spacing:-.0031rem;margin-right:.0031rem;">6459</span></div>
<div class="c t2 l" style="left:9.77rem;top:18.44rem;height:.96rem;"><span style="letter-spacing:-.0065rem;margin-right:.0065rem;">M44 1065.43 / M45 - 897.06</span></div>
<div class="c t2 l" style="left:14.485rem;top:18.44rem;height:.96rem;"><span style="letter-spacing:-.0064rem;margin-right:.0064rem;">3:10</span><br><span style="letter-spacing:-.0064rem;margin-right:.0064rem;">9:10</span></div>
<div class="c t2 r" style="left:19.2rem;top:18.44rem;height:.96rem;"><span style="letter-spacing:-.0019rem;margin-right:.0019rem;">11.54</span></div>
<div class="c t2 r k" style="left:23.915rem;top:18.44rem;height:.96rem;background:rgb(232,135,127);"><span style="letter-spacing:-.0068rem;margin-right:.0068rem;">0.83</span></div>
<div class="c t2 r k" style="left:28.63rem;top:18.44rem;height:.96rem;background:rgb(240,176,170);"><span style="letter-spacing:-.0031rem;margin-right:.0031rem;">27</span></div>
<div class="c t2 r k" style="left:33.345rem;top:18.44rem;height:.96rem;background:rgb(251,236,235);"><span style="letter-spacing:-.0068rem;margin-right:.0068rem;">0.75</span></div>
<div class="stripe" style="left:.34rem;top:19.4rem;width:23.575rem;height:.96rem"></div>
<div class="c t2 l" style="left:.34rem;top:19.4rem;height:.96rem;"><span style="letter-spacing:-.0057rem;margin-right:.0057rem;">Double-seam pipe</span></div>
<div class="c t2 r" style="left:5.055rem;top:19.4rem;height:.96rem;"><span style="letter-spacing:-.0031rem;margin-right:.0031rem;">5135</span></div>
<div class="c t2 l" style="left:9.77rem;top:19.4rem;height:.96rem;"><span style="letter-spacing:-.0061rem;margin-right:.0061rem;">M37 938.25 / M38 - 143.9</span></div>
<div class="c t2 l" style="left:14.485rem;top:19.4rem;height:.96rem;"><span style="letter-spacing:-.0064rem;margin-right:.0064rem;">1:03</span><br><span style="letter-spacing:-.0064rem;margin-right:.0064rem;">7:03</span></div>
<div class="c t2 r" style="left:19.2rem;top:19.4rem;height:.96rem;"><span style="letter-spacing:-.0021rem;margin-right:.0021rem;">11.498</span></div>
<div class="c t2 r k" style="left:23.915rem;top:19.4rem;height:.96rem;background:rgb(232,135,127);"><span style="letter-spacing:-.0068rem;margin-right:.0068rem;">0.83</span></div>
<div class="c t2 r k" style="left:28.63rem;top:19.4rem;height:.96rem;background:rgb(240,179,174);"><span style="letter-spacing:-.0031rem;margin-right:.0031rem;">26</span></div>
<div class="c t2 r k" style="left:33.345rem;top:19.4rem;height:.96rem;background:rgb(254,247,247);"><span style="letter-spacing:-.0081rem;margin-right:.0081rem;">0.3</span></div>
<div class="c t2 l" style="left:.34rem;top:20.36rem;height:.96rem;"><span style="letter-spacing:-.0057rem;margin-right:.0057rem;">Double-seam pipe</span></div>
<div class="c t2 r" style="left:5.055rem;top:20.36rem;height:.96rem;"><span style="letter-spacing:-.0031rem;margin-right:.0031rem;">3089</span></div>
<div class="c t2 l" style="left:9.77rem;top:20.36rem;height:.96rem;"><span style="letter-spacing:-.0053rem;margin-right:.0053rem;">M20 1890.66 / M21 - 771.01</span></div>
<div class="c t2 l" style="left:14.485rem;top:20.36rem;height:.96rem;"><span style="letter-spacing:-.0064rem;margin-right:.0064rem;">4:47</span><br><span style="letter-spacing:-.0058rem;margin-right:.0058rem;">10:47</span></div>
<div class="c t2 r" style="left:19.2rem;top:20.36rem;height:.96rem;"><span style="letter-spacing:-.0061rem;margin-right:.0061rem;">10.98</span></div>
<div class="c t2 r k" style="left:23.915rem;top:20.36rem;height:.96rem;background:rgb(224,98,87);"><span style="letter-spacing:-.0068rem;margin-right:.0068rem;">0.78</span></div>
<div class="c t2 r k" style="left:28.63rem;top:20.36rem;height:.96rem;background:rgb(241,185,180);"><span style="letter-spacing:-.0031rem;margin-right:.0031rem;">24</span></div>
<div class="c t2 r k" style="left:33.345rem;top:20.36rem;height:.96rem;background:rgb(253,243,243);"><span style="letter-spacing:-.0068rem;margin-right:.0068rem;">0.45</span></div>
<div class="stripe" style="left:.34rem;top:21.32rem;width:23.575rem;height:.96rem"></div>
<div class="c t2 l" style="left:.34rem;top:21.32rem;height:.96rem;"><span style="letter-spacing:-.0057rem;margin-right:.0057rem;">Double-seam pipe</span></div>
<div class="c t2 r" style="left:5.055rem;top:21.32rem;height:.96rem;"><span style="letter-spacing:-.0031rem;margin-right:.0031rem;">3815</span></div>
<div class="c t2 l" style="left:9.77rem;top:21.32rem;height:.96rem;"><span style="letter-spacing:-.0054rem;margin-right:.0054rem;">M28 216.72 / M29 - 430.63</span></div>
<div class="c t2 l" style="left:14.485rem;top:21.32rem;height:.96rem;"><span style="letter-spacing:-.0064rem;margin-right:.0064rem;">3:54</span><br><span style="letter-spacing:-.0064rem;margin-right:.0064rem;">9:54</span></div>
<div class="c t2 r" style="left:19.2rem;top:21.32rem;height:.96rem;"><span style="letter-spacing:-.0021rem;margin-right:.0021rem;">11.385</span></div>
<div class="c t2 r k" style="left:23.915rem;top:21.32rem;height:.96rem;background:rgb(224,98,87);"><span style="letter-spacing:-.0068rem;margin-right:.0068rem;">0.78</span></div>
<div class="c t2 r k" style="left:28.63rem;top:21.32rem;height:.96rem;background:rgb(242,188,183);"><span style="letter-spacing:-.0031rem;margin-right:.0031rem;">23</span></div>
<div class="c t2 r k" style="left:33.345rem;top:21.32rem;height:.96rem;background:rgb(254,250,250);"><span style="letter-spacing:-.0081rem;margin-right:.0081rem;">0.2</span></div>
</div>
</body>
</html>
